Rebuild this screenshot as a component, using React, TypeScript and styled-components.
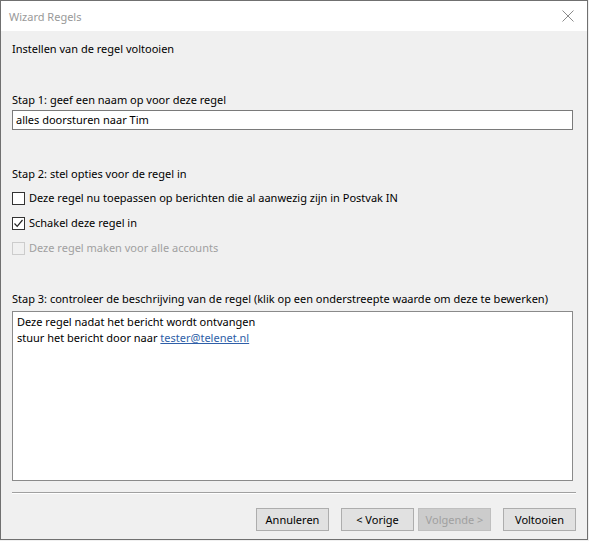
import React from "react";
import styled, { createGlobalStyle } from "styled-components";

const Global = createGlobalStyle`
  html, body { margin: 0; padding: 0; background: #f0f0f0; }
  * { box-sizing: border-box; }
  body { font-family: "Noto Sans", "Open Sans", sans-serif; font-size: 11px; color: #000; }
`;

const Window = styled.div`
  width: 588px;
  height: 540px;
  border: 1px solid #707070;
  background: #f0f0f0;
  display: flex;
  flex-direction: column;
`;

const TitleBar = styled.div`
  height: 30px;
  background: #fff;
  display: flex;
  align-items: center;
  justify-content: space-between;
  padding: 0 8px 0 8px;
  flex-shrink: 0;
`;

const Title = styled.span`
  color: #999;
  font-size: 11px;
`;

const Close = styled.div`
  width: 30px;
  height: 30px;
  display: flex;
  align-items: center;
  justify-content: center;
  margin-right: -4px;
`;

const Content = styled.div`
  flex: 1;
  display: flex;
  flex-direction: column;
  padding: 10px 11px 0 11px;
`;

const Label = styled.div<{ $mt?: number }>`
  line-height: 16px;
  height: 16px;
  margin-top: ${(p) => p.$mt ?? 0}px;
  white-space: nowrap;
`;

const TextInput = styled.div`
  margin-top: 2px;
  width: 561px;
  height: 20px;
  border: 1px solid #7a7a7a;
  background: #fff;
  padding: 0 3px;
  line-height: 18px;
`;

const Options = styled.div`
  margin-top: 8px;
  display: flex;
  flex-direction: column;
  gap: 9px;
`;

const Row = styled.div<{ $disabled?: boolean }>`
  display: flex;
  align-items: center;
  gap: 4px;
  height: 16px;
  line-height: 16px;
  color: ${(p) => (p.$disabled ? "#a0a0a0" : "#000")};
`;

const Box = styled.div<{ $disabled?: boolean }>`
  width: 13px;
  height: 13px;
  border: 1px solid ${(p) => (p.$disabled ? "#cccccc" : "#333")};
  background: ${(p) => (p.$disabled ? "#f0f0f0" : "#fff")};
  display: flex;
  align-items: center;
  justify-content: center;
  flex-shrink: 0;
`;

const Description = styled.div`
  margin-top: 4px;
  width: 561px;
  height: 170px;
  border: 1px solid #8a8a8a;
  background: #fff;
  padding: 2px 4px;
  line-height: 16px;
`;

const Link = styled.span`
  color: #2f5fa8;
  text-decoration: underline;
`;

const Separator = styled.div`
  margin-top: 11px;
  width: 564px;
  height: 1px;
  background: #a0a0a0;
  border-bottom: 1px solid #fff;
  box-sizing: content-box;
`;

const ButtonBar = styled.div`
  margin-top: 14px;
  width: 564px;
  display: flex;
  justify-content: flex-end;
`;

const Button = styled.div<{ $disabled?: boolean; $ml?: number }>`
  width: 73px;
  height: 23px;
  margin-left: ${(p) => p.$ml ?? 0}px;
  border: 1px solid ${(p) => (p.$disabled ? "#bfbfbf" : "#adadad")};
  background: ${(p) => (p.$disabled ? "#cccccc" : "#e1e1e1")};
  color: ${(p) => (p.$disabled ? "#a0a0a0" : "#000")};
  display: flex;
  align-items: center;
  justify-content: center;
`;

const Check = () => (
  <svg width="11" height="11" viewBox="0 0 11 11">
    <path d="M1.5 5.5 L4.2 8.3 L9.5 2" fill="none" stroke="#222" strokeWidth="1.2" />
  </svg>
);

export default function App() {
  return (
    <>
      <Global />
      <Window>
        <TitleBar>
          <Title>Wizard Regels</Title>
          <Close>
            <svg width="12" height="12" viewBox="0 0 12 12">
              <path d="M0.5 0.5 L11.5 11.5 M11.5 0.5 L0.5 11.5" stroke="#8a8a8a" strokeWidth="1" />
            </svg>
          </Close>
        </TitleBar>
        <Content>
          <Label>Instellen van de regel voltooien</Label>
          <Label $mt={35}>Stap 1: geef een naam op voor deze regel</Label>
          <TextInput>alles doorsturen naar Tim</TextInput>
          <Label $mt={36}>Stap 2: stel opties voor de regel in</Label>
          <Options>
            <Row>
              <Box />
              Deze regel nu toepassen op berichten die al aanwezig zijn in Postvak IN
            </Row>
            <Row>
              <Box>
                <Check />
              </Box>
              Schakel deze regel in
            </Row>
            <Row $disabled>
              <Box $disabled />
              Deze regel maken voor alle accounts
            </Row>
          </Options>
          <Label $mt={35}>
            Stap 3: controleer de beschrijving van de regel (klik op een onderstreepte waarde om deze te bewerken)
          </Label>
          <Description>
            <div>Deze regel nadat het bericht wordt ontvangen</div>
            <div>
              stuur het bericht door naar <Link>tester@telenet.nl</Link>
            </div>
          </Description>
          <Separator />
          <ButtonBar>
            <Button>Annuleren</Button>
            <Button $ml={12}>&lt; Vorige</Button>
            <Button $ml={4} $disabled>
              Volgende &gt;
            </Button>
            <Button $ml={12}>Voltooien</Button>
          </ButtonBar>
        </Content>
      </Window>
    </>
  );
}
